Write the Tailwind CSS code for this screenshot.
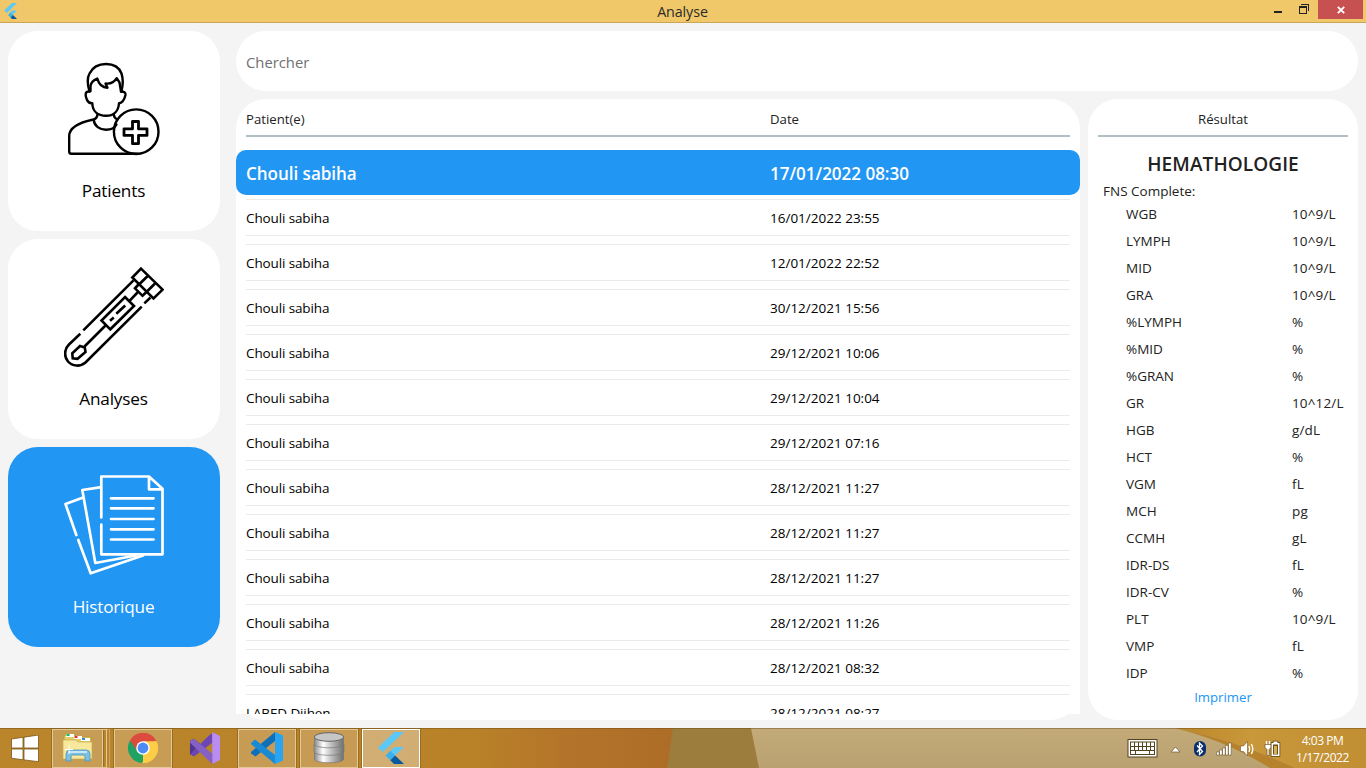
<!DOCTYPE html>
<html lang="fr">
<head>
<meta charset="utf-8">
<title>Analyse</title>
<script src="https://cdn.jsdelivr.net/npm/@tailwindcss/browser@4"></script>
</head>
<body class="w-[1366px] h-[768px] overflow-hidden flex flex-col bg-[#f4f4f4] font-['Open_Sans',sans-serif] font-normal text-[13.5px] text-black">

<!-- Title bar -->
<header class="h-[23px] shrink-0 bg-[#f0c869] border-b border-[#c9a656] flex items-start justify-between">
  <div class="w-[109px] pl-[3px] pt-[2px]">
    <svg width="16" height="18" viewBox="0 0 16 18"><path d="M9 1h5L4 11 1 8.5z" fill="#5fc9f5"/><path d="M9 8.500h5l-4.500 4.500L7 10.500z" fill="#5fc9f5"/><path d="M5 13l2.500-2.500 2.500 2.500-2.500 2.500z" fill="#3ab3e8"/><path d="M7.500 15.500L10 13l4 4H9z" fill="#0b5a9d"/></svg>
  </div>
  <div class="text-[14.3px] leading-[23px] text-[#2b2b2b] tracking-[-0.1px] mr-[2px]">Analyse</div>
  <div class="flex items-start">
    <svg width="60" height="22" viewBox="1258 0 60 22" shape-rendering="crispEdges"><path d="M1274 11h8v2h-8z" fill="#222"/><path d="M1301 4h8v7h-1V5h-7z" fill="#222"/><path fill-rule="evenodd" d="M1299 6h8v8h-8zM1300 8v5h6V8z" fill="#222"/></svg>
    <div class="w-[45px] h-[19px] mr-[3px] bg-[#c75050] flex items-center justify-center pl-[1px]"><svg width="8" height="8" viewBox="0 0 8 8"><path d="M.8 .8l6.400 6.400M7.200 .8L.8 7.200" stroke="#fff" stroke-width="1.900"/></svg></div>
  </div>
</header>

<main class="h-[705px] shrink-0 p-2 flex gap-4">
  <!-- Navigation -->
  <nav class="w-[212px] flex flex-col gap-2 text-[17.2px] tracking-[-0.2px] leading-6">
    <a class="h-[200px] rounded-[30px] bg-white flex flex-col items-center pt-[28px]">
      <svg width="100" height="100" viewBox="64 59 100 100" fill="none" stroke="#000" stroke-width="2.400" stroke-linejoin="round" stroke-linecap="round">
        <path d="M89.500 91.500C87 83 87.500 77 89.500 73.500C93 66.500 99 64 106 64C113 64 119 67 121.500 73.500C123 78 123 85 121.500 91.500"/>
        <path d="M90.500 91V86C91 82 94 80 97.300 78.600C98.500 83 101 87.500 107.500 87.700L105.500 83.500C110 84 114.500 82 116.700 78.200L119.500 82.500L121 91.500"/>
        <path d="M89.500 91.500C85 91 84.800 95 86.800 99.500C88 102.300 90 103.500 92.300 103.300C92.500 111.500 98 115.800 106 115.800C113.500 115.800 118.500 111.500 119 103.300C123 103 124.500 99 125.500 95C125.800 92.500 124 91.300 121 91.500"/>
        <path d="M97.500 114.500C97 118 96 119 93.500 119.500C84 121.500 69.200 125.500 69.200 136V151.500Q69.200 153.800 71.500 153.800H137M93.700 120C94.500 126 99.500 129.700 106 129.700C111.500 129.700 115 127.500 116.500 124.500M113.800 114.500C114 117.500 115 118.500 117.500 119.500"/>
        <circle cx="136.200" cy="131.700" r="22.300"/>
        <path d="M132.500 121.500h6v7.400h8.500v6.500h-8.500v8.300h-6v-8.300h-8.500v-6.500h8.500z" stroke-width="2.800"/>
      </svg>
      <span class="mt-[20px] mr-[1px]">Patients</span>
    </a>
    <a class="h-[200px] rounded-[30px] bg-white flex flex-col items-center pt-[28px]">
      <svg width="100" height="100" viewBox="64 267 100 100" fill="none" stroke="#000" stroke-width="2.600" stroke-linejoin="miter" stroke-linecap="butt">
        <path d="M141 268.600L162.600 289.600L153.500 298.500L132.300 277.500z M147.700 276L138.500 285 M155.500 283L146.500 292"/>
        <path d="M138.500 284.500L135 288.300L142.500 295.800L146.500 292M137.500 292.500L129.500 300.800M133.500 280.300L83.300 330.300M80.300 333.800L69 344.500C63.500 350 64.500 357.500 68 361.500C72.500 366.500 80 367 85.500 362.500L141.700 306.600M144.300 303.400L150.500 297.500"/>
        <path d="M125 297L134 306L110.300 329.300L101.500 320.500zM105.500 325.500L84.500 346.500M125.200 305.500L116.300 313.800M113.800 317.500L110 320.800"/>
        <path d="M80 346L84.800 347.500L85.500 352L77.500 358.800L72.700 358.300L72.300 353.300z"/>
      </svg>
      <span class="mt-[20px] mr-[1px]">Analyses</span>
    </a>
    <a class="h-[200px] rounded-[30px] bg-[#2196f3] text-white flex flex-col items-center pt-[28px]">
      <svg width="100" height="100" viewBox="64 475 100 100" fill="none" stroke="#fff" stroke-width="2.700" stroke-linejoin="round" stroke-linecap="round">
        <path d="M101.300 517.500V476.500H149L162.500 488.800V554.300H101.300V524.500M149 476.500V489.300H162.500"/>
        <path d="M111 498.300H153.500M111 508.300H153.500M111 519H153.500M111 529.300H153.500M111 539.500H153.500"/>
        <path d="M99.800 487.300L82.300 490L95.300 563L136 555.500"/>
        <path d="M82.500 497.700L65.500 504L76.300 535M78.300 540L90.700 573.300L143 555.500"/>
      </svg>
      <span class="mt-[20px] mr-[1px]">Historique</span>
    </a>
  </nav>

  <div class="w-[1122px] flex flex-col gap-2">
    <!-- Search -->
    <div class="h-[60px] shrink-0 rounded-[30px] bg-white flex items-center px-[10px] pt-[3px] text-[14.800px] text-[#707070]">Chercher</div>

    <div class="flex gap-2">
      <!-- History list -->
      <section class="w-[844px] h-[621px] rounded-[30px] bg-white flex flex-col">
        <div class="h-[38px] shrink-0 mx-[10px] border-b-2 border-[#b0bec5] flex items-center pt-[5px] text-[#222] text-[13.2px]">
          <span class="w-[524px]">Patient(e)</span><span>Date</span>
        </div>
        <div id="rows" class="mt-[13px] h-[564px] shrink-0 overflow-hidden bg-white">
          <div class="h-[45px] rounded-[10px] bg-[#2196f3] text-white font-semibold text-[17.1px] tracking-[-0.05px] flex items-center px-[10px] pt-[2px]">
            <span class="w-[524px]">Chouli sabiha</span><span>17/01/2022 08:30</span>
          </div>
        </div>
      </section>

      <!-- Result -->
      <section class="w-[270px] h-[621px] rounded-[30px] bg-white flex flex-col items-center text-[#222] text-[13.5px]">
        <div class="h-[38px] w-[250px] shrink-0 border-b-2 border-[#b0bec5] flex items-center justify-center pt-[5px] text-[13.2px]">Résultat</div>
        <h1 class="mt-[13px] mb-[1px] text-[19px] leading-7 font-semibold tracking-[0.1px]">HEMATHOLOGIE</h1>
        <div class="w-[240px] h-[22px] leading-[24px]">FNS Complete:</div>
        <ul id="units" class="w-[232px] pl-[19px]"></ul>
        <a class="text-[#2196f3] text-[13.200px] leading-5">Imprimer</a>
      </section>
    </div>
  </div>
</main>

<!-- Taskbar -->
<footer class="relative h-10 shrink-0 bg-[#bd862a] flex items-center justify-between text-white">
  <svg class="absolute inset-0" width="1366" height="40" viewBox="0 0 1366 40">
    <defs>
      <linearGradient id="warm"><stop offset="0" stop-color="#ba852b"/><stop offset=".7" stop-color="#b98228"/><stop offset=".85" stop-color="#b3732a"/><stop offset="1" stop-color="#ae6d27"/></linearGradient>
      <linearGradient id="gold"><stop offset="0" stop-color="#bb862b"/><stop offset=".4" stop-color="#c9983a"/><stop offset="1" stop-color="#c18e33"/></linearGradient>
      <linearGradient id="sand" x2="0" y2="1"><stop offset="0" stop-color="#c3aa79"/><stop offset="1" stop-color="#b9a171"/></linearGradient>
    </defs>
    <path d="M0 0H675V40H0z" fill="url(#warm)"/>
    <path d="M673 0H751L759 40H667z" fill="#9c7d3e"/>
    <path d="M751 0H1366V40H759z" fill="url(#sand)"/>
    <path d="M1174 0H1366V40H1295Q1230 10 1174 0z" fill="url(#gold)"/>
    <path d="M1174 0Q1230 10 1295 40H1270Q1225 12 1174 0z" fill="#b6832c"/>
    <path d="M0 .5H1366" stroke="#6b4a10" stroke-opacity=".45"/>
  </svg>

  <div class="relative h-10 flex items-center pl-[11px]">
    <svg width="28" height="27" viewBox="0 0 28 27" fill="#fff" stroke="#7b5514" stroke-width=".8"><path d="M.5 4L12 2.300V13H.5zM13 2.200L27.500 0V13H13zM.5 14H12V24.800L.5 23.200zM13 14H27.500V26.700L13 24.900z"/></svg>

    <div class="ml-[13px] w-[51px] h-[39px] border border-[#e3c899] bg-white/20 outline outline-[#86601d]/60 flex items-center justify-center">
      <svg width="34" height="32" viewBox="0 0 34 32">
        <path d="M3 5V3h11l2 2h14v20H3z" fill="#e5cf6b" stroke="#b79a3b"/><path d="M5 2h8v3H5z" fill="#fff"/><path d="M5.500 2h3v2h-3z" fill="#1db954"/><path d="M13 4h8v3h-8z" fill="#fff"/><path d="M13.500 4h3v2h-3z" fill="#d7372c"/><path d="M20 6h9v3h-9z" fill="#fff"/><path d="M21 6h3v2h-3z" fill="#2e8be0"/>
        <path d="M2 8h13l2 2h14v17H2z" fill="#f7e89b" stroke="#c9ab4a" stroke-width=".7"/><path d="M5 29V22q0-4 4-4h16q4 0 4 4v7h-5v-4q0-2-2-2H12q-2 0-2 2v4z" fill="#7cc0e4" stroke="#4d94bd" stroke-width=".8"/><path d="M8 19h18v2H8z" fill="#c6e7f6"/><path d="M8 13v9M4 17.500h8" stroke="#fff"/>
      </svg>
    </div>
    <div class="w-[4px] h-[39px] border-r border-y border-[#e3c899]"></div>
    <div class="w-[3px] h-[39px] border-r border-y border-[#c9a56b]"></div>

    <div class="ml-[4px] w-[58px] h-[39px] border border-[#e3c899] bg-white/20 outline outline-[#86601d]/60 flex items-center justify-center">
      <svg width="30" height="30" viewBox="0 0 30 30"><path d="M15 15L2 7.500A15 15 0 0 1 28 7.500z" fill="#dc4b3e"/><path d="M15 15L28 7.500A15 15 0 0 1 15 30z" fill="#fdcd47"/><path d="M15 15V30A15 15 0 0 1 2 7.500z" fill="#1ea362"/><path d="M15 8.300H28.300L28 7.500Q24 0 15 0Q7 0 2 7.500L9.200 18.300z" fill="#dc4b3e"/><path d="M20.800 18.400L14 30A15 15 0 0 0 28.300 8.300H15z" fill="#fdcd47"/><circle cx="15" cy="15" r="6.800" fill="#fff"/><circle cx="15" cy="15" r="5.400" fill="#4c8bf5"/></svg>
    </div>

    <svg class="ml-[17px]" width="32" height="32" viewBox="0 0 33 33"><path d="M1 9l4-2 8 6.500L7 19.500 5.500 18v-2L5.500 20v5L1 23z" fill="#52348f"/><path d="M1 23L20 4l4-3v10L5.500 25z" fill="#6b47b5"/><path d="M24 0l8 4v25l-8 4V0z" fill="#b98cf5"/><path d="M5 7L24 22.500V33L1 11V9z" fill="#8661c5"/></svg>

    <div class="ml-[17px] w-[58px] h-[39px] border border-[#e3c899] bg-white/20 outline outline-[#86601d]/60 flex items-center justify-center">
      <svg width="32" height="32" viewBox="0 0 32 32"><path d="M24 0v9L4.500 24.500 0 21.500v-1.500z" fill="#0f6fb8"/><path d="M0 11l4-3.500L24 23v9L0 12z" fill="#1a8ad4"/><path d="M24 0l8 3.500v25L24 32z" fill="#27a5f2"/></svg>
    </div>

    <div class="ml-[4px] w-[58px] h-[39px] border border-[#e3c899] bg-white/20 outline outline-[#86601d]/60 flex items-center justify-center">
      <svg width="32" height="32" viewBox="0 0 32 32"><defs><linearGradient id="metal"><stop offset="0" stop-color="#8a8a8a"/><stop offset=".3" stop-color="#fff"/><stop offset=".6" stop-color="#bbb"/><stop offset="1" stop-color="#707070"/></linearGradient></defs><g fill="url(#metal)" stroke="#777" stroke-width=".7"><path d="M1.500 20v7c0 5 29 5 29 0v-7z"/><path d="M1 12.500v7c0 5 30 5 30 0v-7z"/><path d="M1.500 5v7c0 5 29 5 29 0V5z"/></g><ellipse cx="16" cy="5" rx="14.700" ry="4.300" fill="#c6c6c6" stroke="#666"/></svg>
    </div>

    <div class="ml-[4px] w-[58px] h-[39px] border border-white bg-white/35 outline outline-[#86601d]/60 flex items-center justify-center">
      <svg width="26" height="32" viewBox="0 0 26 32"><path d="M16.500 0H26L5 20 0 15.500z" fill="#5bc8f8"/><path d="M16.500 15H26L17 23.500 12.300 19z" fill="#5bc8f8"/><path d="M7.500 23.500l4.800-4.800 4.800 4.800-4.800 4.800z" fill="#39b1ee"/><path d="M12.300 28.300l4.800-4.800L26 32H16z" fill="#075a9e"/></svg>
    </div>
  </div>

  <div class="relative h-10 flex items-center">
    <svg width="160" height="40" viewBox="1124 728 160 40">
      <rect x="1128" y="739.500" width="29" height="17.500" fill="#fff" stroke="#55431f"/>
      <rect x="1130.500" y="742" width="24" height="12.500" fill="#fff" stroke="#55431f"/>
      <path d="M1131 746.500h23M1131 750.500h23M1134.500 742v8.500M1138.500 742v8.500M1142.500 742v8.500M1146.500 742v8.500M1150.500 742v8.500M1135.500 750.500v4M1149.500 750.500v4" stroke="#55431f"/>
      <path d="M1171 752l4.500-5 4.500 5z" fill="#fff" stroke="#6b5730" stroke-width=".7"/>
      <rect x="1194" y="741" width="12" height="15.500" rx="6" fill="#0a2f6e"/><path d="M1197 745.500l5.500 6-3 3v-11.500l3 3-5.500 6" fill="none" stroke="#fff" stroke-width="1.300"/>
      <g fill="#fff" stroke="#5c4212" stroke-width=".5"><path d="M1216.500 752h2.700v3h-2.700zM1219.500 750h2.700v5h-2.700zM1222.500 748h2.700v7h-2.700zM1225.500 745.500h2.700v9.500h-2.700zM1228.500 743h2.700v12h-2.700z"/>
      <path d="M1240.500 746h3l4-4.500v14.500l-4-4.500h-3z"/></g>
      <path d="M1249 746q1.500 3 0 6M1251.300 744q3 5 0 10" fill="none" stroke="#fff" stroke-width="1.400"/>
      <path d="M1266.500 741v4M1269.500 741v4" stroke="#fff" stroke-width="1.400"/><path d="M1265 744.500h6v3l-2 2v6h-2v-6l-2-2z" fill="#fff" stroke="#5c4212" stroke-width=".6"/>
      <path d="M1273.500 741.500h4v1.500h2v13h-8v-13h2z" fill="#6b4d17" stroke="#5c4212" stroke-width="1.500"/><path fill-rule="evenodd" d="M1273.500 741.500h4v1.500h2v13h-8v-13h2zM1273 744.500v10h5v-10z" fill="#fff"/><path d="M1274 746h3v8h-3z" fill="#d9ae52"/>
    </svg>
    <div class="w-[78px] mr-[4px] text-center text-[12px] leading-[17px] tracking-[-0.45px] pt-[2px] pr-[1px]">4:03 PM<br>1/17/2022</div>
  </div>
</footer>

<script>
const visits = [
  ['Chouli sabiha','16/01/2022 23:55'],['Chouli sabiha','12/01/2022 22:52'],['Chouli sabiha','30/12/2021 15:56'],
  ['Chouli sabiha','29/12/2021 10:06'],['Chouli sabiha','29/12/2021 10:04'],['Chouli sabiha','29/12/2021 07:16'],
  ['Chouli sabiha','28/12/2021 11:27'],['Chouli sabiha','28/12/2021 11:27'],['Chouli sabiha','28/12/2021 11:27'],
  ['Chouli sabiha','28/12/2021 11:26'],['Chouli sabiha','28/12/2021 08:32'],['LABED Djihen','28/12/2021 08:27']];
document.getElementById('rows').insertAdjacentHTML('beforeend', visits.map(([n, d]) =>
  `<div class="h-[45px] px-[10px] py-[4px]"><div class="h-[37px] border-y border-[#ebebeb] flex items-center pt-[2px]"><span class="w-[524px] tracking-[-0.12px]">${n}</span><span>${d}</span></div></div>`).join(''));
const units = [['WGB','10^9/L'],['LYMPH','10^9/L'],['MID','10^9/L'],['GRA','10^9/L'],['%LYMPH','%'],['%MID','%'],['%GRAN','%'],['GR','10^12/L'],['HGB','g/dL'],['HCT','%'],['VGM','fL'],['MCH','pg'],['CCMH','gL'],['IDR-DS','fL'],['IDR-CV','%'],['PLT','10^9/L'],['VMP','fL'],['IDP','%']];
document.getElementById('units').innerHTML = units.map(([n, u]) =>
  `<li class="h-[27px] flex items-center whitespace-nowrap"><span class="w-[166px] shrink-0">${n}</span><span class="tracking-[0.15px]">${u}</span></li>`).join('');
</script>
</body>
</html>
